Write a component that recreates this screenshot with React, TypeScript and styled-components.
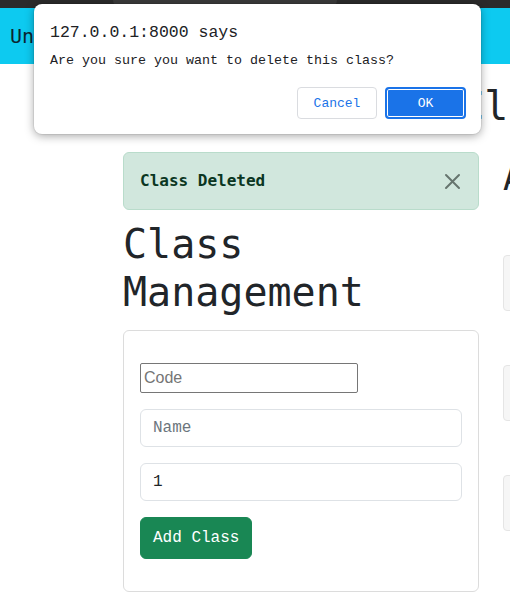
import React from "react";
import styled, { createGlobalStyle } from "styled-components";

const Global = createGlobalStyle`
  html, body { margin: 0; padding: 0; background: #fff; overflow: hidden; }
  body { font-family: "DejaVu Sans Mono", monospace; color: #212529; }
  * { box-sizing: border-box; }
`;

const Page = styled.div`
  position: relative;
  width: 510px;
  height: 601px;
  overflow: hidden;
`;

const TopStrip = styled.div`
  height: 8px;
  background: #2b2b2b;
  display: flex;
  padding-left: 113px;
`;

const StripTab = styled.div`
  width: 224px;
  height: 8px;
  background: #3a3a3a;
  border-radius: 0 0 8px 8px;
`;

const Navbar = styled.nav`
  height: 56px;
  background: #0dcaf0;
  display: flex;
  align-items: center;
  padding-left: 10px;
`;

const Brand = styled.span`
  font-family: "DejaVu Sans Mono", monospace;
  font-size: 20px;
  color: #0b2530;
  white-space: nowrap;
`;

const Main = styled.main`
  padding-left: 123px;
`;

const PageTitle = styled.h1`
  margin: 18px 0 0;
  font-family: "DejaVu Sans Mono", monospace;
  font-weight: 400;
  font-size: 40px;
  line-height: 48px;
  white-space: nowrap;
  color: #212529;
`;

const Row = styled.div`
  display: flex;
  gap: 24px;
  margin-top: 22px;
  width: 700px;
`;

const LeftCol = styled.section`
  width: 356px;
  flex: none;
`;

const RightCol = styled.section`
  width: 300px;
  flex: none;
`;

const Alert = styled.div`
  position: relative;
  background: #d1e7dd;
  border: 1px solid #b9dccb;
  border-radius: 6px;
  padding: 16px 48px 16px 16px;
  color: #0a3622;
  font-family: "DejaVu Sans Mono", monospace;
  font-weight: 700;
  font-size: 16px;
  line-height: 24px;
  margin-bottom: 10px;
`;

const CloseBtn = styled.button`
  position: absolute;
  top: 0;
  right: 0;
  height: 56px;
  width: 52px;
  border: 0;
  background: transparent;
  display: flex;
  align-items: center;
  justify-content: center;
  padding: 0;
`;

const Heading = styled.h2`
  margin: 0 0 14px;
  font-family: "DejaVu Sans Mono", monospace;
  font-weight: 400;
  font-size: 40px;
  line-height: 48px;
  color: #212529;
`;

const Card = styled.div`
  border: 1px solid #dcdcdc;
  border-radius: 6px;
  padding: 32px 16px;
`;

const Form = styled.form`
  display: flex;
  flex-direction: column;
  align-items: flex-start;
  gap: 16px;
`;

const PlainInput = styled.input`
  width: 218px;
  height: 30px;
  border: 1px solid #767676;
  border-radius: 2px;
  padding: 1px 3px;
  font-family: "Liberation Sans", Arial, sans-serif;
  font-size: 16px;
  color: #212529;
  &::placeholder { color: #757575; }
`;

const FormControl = styled.input`
  width: 322px;
  height: 38px;
  border: 1px solid #dee2e6;
  border-radius: 6px;
  padding: 6px 12px;
  font-family: "Liberation Mono", monospace;
  font-size: 16px;
  color: #212529;
  background: #fff;
  &::placeholder { color: #6c757d; }
`;

const SubmitButton = styled.button`
  height: 42px;
  padding: 8px 12px;
  border: 1px solid #198754;
  border-radius: 6px;
  background: #198754;
  color: #fff;
  font-family: "Liberation Mono", monospace;
  font-size: 16px;
  line-height: 24px;
`;

const SubTitle = styled.h2`
  margin: 6px 0 0;
  font-family: "DejaVu Sans Mono", monospace;
  font-weight: 500;
  font-size: 34px;
  line-height: 41px;
  white-space: nowrap;
`;

const ListBox = styled.div`
  margin-top: 56px;
  display: flex;
  flex-direction: column;
  gap: 54px;
`;

const ListItem = styled.div`
  height: 56px;
  background: #f6f6f6;
  border: 1px solid #e5e5e5;
  border-radius: 4px;
`;

const Dialog = styled.div`
  position: absolute;
  top: 4px;
  left: 34px;
  width: 447px;
  height: 130px;
  background: #fff;
  border-radius: 8px;
  box-shadow: 0 2px 10px rgba(0, 0, 0, 0.35), 0 0 0 1px rgba(0, 0, 0, 0.06);
  padding: 20px 15px 15px 16px;
  display: flex;
  flex-direction: column;
  font-family: "Liberation Mono", monospace;
  color: #202124;
`;

const DialogTitle = styled.div`
  font-size: 16.5px;
  line-height: 18px;
`;

const DialogMessage = styled.div`
  margin-top: 11px;
  font-size: 13.33px;
  line-height: 15px;
`;

const DialogActions = styled.div`
  margin-top: auto;
  display: flex;
  justify-content: flex-end;
  gap: 8px;
`;

const DialogButton = styled.button<{ $primary?: boolean }>`
  height: 32px;
  width: ${(p) => (p.$primary ? "81px" : "80px")};
  border-radius: 4px;
  font-family: "Liberation Mono", monospace;
  font-size: 13px;
  padding: 0;
  border: ${(p) => (p.$primary ? "2px solid #1a73e8" : "1px solid #dadce0")};
  background: ${(p) => (p.$primary ? "#1a73e8" : "#fff")};
  color: ${(p) => (p.$primary ? "#fff" : "#1a73e8")};
  box-shadow: ${(p) => (p.$primary ? "inset 0 0 0 1px #fff" : "none")};
`;

const CloseIcon = () => (
  <svg width="17" height="17" viewBox="0 0 17 17">
    <path d="M2 2 L15 15 M15 2 L2 15" stroke="#66756e" strokeWidth="2" strokeLinecap="round" />
  </svg>
);

export default function App() {
  return (
    <Page>
      <Global />
      <TopStrip>
        <StripTab />
      </TopStrip>
      <Navbar>
        <Brand>University Management</Brand>
      </Navbar>
      <Main>
        <PageTitle>School Admin: Classes</PageTitle>
        <Row>
          <LeftCol>
            <Alert>
              Class Deleted
              <CloseBtn type="button" aria-label="Close">
                <CloseIcon />
              </CloseBtn>
            </Alert>
            <Heading>
              Class
              <br />
              Management
            </Heading>
            <Card>
              <Form onSubmit={(e) => e.preventDefault()}>
                <PlainInput placeholder="Code" />
                <FormControl placeholder="Name" />
                <FormControl type="number" defaultValue="1" />
                <SubmitButton type="submit">Add Class</SubmitButton>
              </Form>
            </Card>
          </LeftCol>
          <RightCol>
            <SubTitle>All Classes</SubTitle>
            <ListBox>
              <ListItem />
              <ListItem />
              <ListItem />
            </ListBox>
          </RightCol>
        </Row>
      </Main>
      <Dialog role="alertdialog">
        <DialogTitle>127.0.0.1:8000 says</DialogTitle>
        <DialogMessage>Are you sure you want to delete this class?</DialogMessage>
        <DialogActions>
          <DialogButton>Cancel</DialogButton>
          <DialogButton $primary>OK</DialogButton>
        </DialogActions>
      </Dialog>
    </Page>
  );
}
